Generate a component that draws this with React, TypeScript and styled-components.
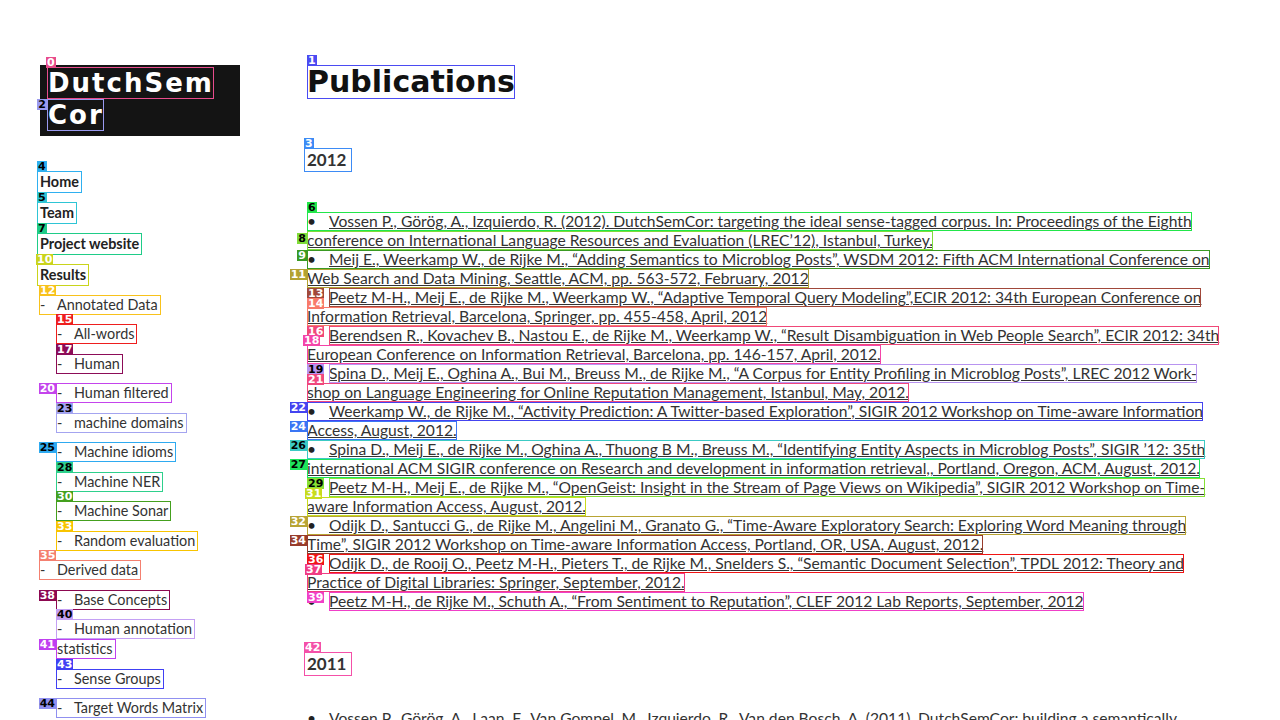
import React from 'react';
import styled, { createGlobalStyle, css } from 'styled-components';

const GlobalStyle = createGlobalStyle`
  html, body { margin: 0; padding: 0; background: #fff; overflow: hidden; }
  body { font-family: Lato, "Open Sans", sans-serif; color: #333; }
`;

const Page = styled.div`
  display: flex;
  align-items: flex-start;
  padding: 65px 0 0 40px;
  height: 720px;
  box-sizing: border-box;
  overflow: hidden;
`;

const Sidebar = styled.aside`
  width: 200px;
  flex-shrink: 0;
  display: flex;
  flex-direction: column;
`;

const Mark = styled.span<{ $c: string }>`
  position: relative;
  display: inline-block;
  outline: 1px solid ${(p) => p.$c};
  outline-offset: -1px;
`;

type At = 'top' | 'left' | 'bullet';

const Badge = styled.span<{ $bg: string; $dark?: boolean; $at: At; $dx?: number; $dy?: number }>`
  position: absolute;
  z-index: 2;
  background: ${(p) => p.$bg};
  color: ${(p) => (p.$dark ? '#000' : '#fff')};
  font-family: "DejaVu Sans", sans-serif;
  font-weight: bold;
  font-size: 11px;
  line-height: 11px;
  letter-spacing: 0;
  padding: 0 1px;
  white-space: nowrap;
  text-decoration: none;
  ${(p) =>
    p.$at === 'top'
      ? css`left: ${p.$dx ?? 0}px; top: ${p.$dy ?? -10}px;`
      : p.$at === 'left'
      ? css`right: 100%; top: ${p.$dy ?? 0}px;`
      : css`left: -22px; top: 0;`}
`;

type TagSpec = { n: number; c: string; dark?: boolean; at: At; dx?: number; dy?: number };

const Tag: React.FC<{ t: TagSpec }> = ({ t }) => (
  <Badge $bg={t.c} $dark={t.dark} $at={t.at} $dx={t.dx} $dy={t.dy}>
    {t.n}
  </Badge>
);

const Logo = styled.div`
  background: #141414;
  color: #fff;
  padding: 2px 0 5px 7px;
  display: flex;
  flex-direction: column;
  align-items: flex-start;
  font-family: "DejaVu Sans", sans-serif;
  font-weight: bold;
  font-size: 26px;
  line-height: 32px;
  letter-spacing: 2px;
`;

const LogoLine = styled(Mark)`
  padding-left: 1px;
`;

const Nav = styled.nav`
  margin-top: 30px;
  display: flex;
  flex-direction: column;
`;

const NavRow = styled.div<{ $h: number; $indent: number }>`
  height: ${(p) => p.$h}px;
  display: flex;
  flex-direction: column;
  justify-content: center;
  align-items: flex-start;
  margin-left: ${(p) => p.$indent}px;
`;

const TopLink = styled(Mark)`
  font-weight: 700;
  font-size: 14.4px;
  line-height: 20px;
  padding: 1px 3px;
  color: #222;
`;

const SubLink = styled(Mark)`
  font-size: 14.4px;
  line-height: 20px;
  padding: 0 3px 0 1px;
  color: #333;
`;

const Dash = styled.span`
  display: inline-block;
  width: 17px;
`;

const Main = styled.main`
  margin-left: 67px;
  flex: 1;
  min-width: 0;
`;

const Title = styled.h1`
  margin: 0;
  font-family: "DejaVu Sans", sans-serif;
  font-weight: bold;
  font-size: 30px;
  line-height: 34px;
  color: #111;
  display: flex;
`;

const YearHeading = styled.h2<{ $mt: number }>`
  margin: ${(p) => p.$mt}px 0 0 -3px;
  display: flex;
  font-family: Lato, sans-serif;
  font-weight: 700;
  font-size: 17px;
  line-height: 20px;
  color: #333;
`;

const YearBox = styled(Mark)`
  padding: 2px 6px 2px 3px;
`;

const PubList = styled.ul<{ $mt: number }>`
  list-style: none;
  margin: ${(p) => p.$mt}px 0 0;
  padding: 0;
  font-size: 15.65px;
  line-height: 19px;
`;

const Pub = styled.li`
  display: flex;
  flex-direction: column;
`;

const PubLine = styled.div`
  height: 19px;
  white-space: nowrap;
  display: flex;
  align-items: flex-start;
`;

const LineBox = styled(Mark)`
  height: 19px;
`;

const Bullet = styled.span`
  display: inline-block;
  width: 22px;
  color: #222;
`;

const PubLink = styled.a`
  color: #333;
  text-decoration: underline;
`;

type NavSpec =
  | { kind: 'top' | 'l1' | 'l2'; text: string; t: TagSpec }
  | { kind: 'wrap'; text: string; rest: string; t: TagSpec; t2: TagSpec };

const nav: NavSpec[] = [
  { kind: 'top', text: 'Home', t: { n: 4, c: '#2fb0f0', dark: true, at: 'top' } },
  { kind: 'top', text: 'Team', t: { n: 5, c: '#2ec5d5', dark: true, at: 'top' } },
  { kind: 'top', text: 'Project website', t: { n: 7, c: '#1fcc88', dark: true, at: 'top' } },
  { kind: 'top', text: 'Results', t: { n: 10, c: '#c9d41c', at: 'top', dx: -1 } },
  { kind: 'l1', text: 'Annotated Data', t: { n: 12, c: '#f8c21c', at: 'top' } },
  { kind: 'l2', text: 'All-words', t: { n: 15, c: '#ee1e1e', at: 'top' } },
  { kind: 'l2', text: 'Human', t: { n: 17, c: '#8c0c58', at: 'top' } },
  { kind: 'l2', text: 'Human filtered', t: { n: 20, c: '#c444ec', at: 'left' } },
  { kind: 'l2', text: 'machine domains', t: { n: 23, c: '#a4a4f0', dark: true, at: 'top' } },
  { kind: 'l2', text: 'Machine idioms', t: { n: 25, c: '#2eaaf0', dark: true, at: 'left' } },
  { kind: 'l2', text: 'Machine NER', t: { n: 28, c: '#2ed08c', dark: true, at: 'top' } },
  { kind: 'l2', text: 'Machine Sonar', t: { n: 30, c: '#44a01e', at: 'top' } },
  { kind: 'l2', text: 'Random evaluation', t: { n: 33, c: '#f8c400', at: 'top' } },
  { kind: 'l1', text: 'Derived data', t: { n: 35, c: '#f48070', at: 'top' } },
  { kind: 'l2', text: 'Base Concepts', t: { n: 38, c: '#8c0850', at: 'left' } },
  {
    kind: 'wrap',
    text: 'Human annotation',
    rest: 'statistics',
    t: { n: 40, c: '#c4a0f4', dark: true, at: 'top' },
    t2: { n: 41, c: '#c040f0', at: 'left' },
  },
  { kind: 'l2', text: 'Sense Groups', t: { n: 43, c: '#4040f4', at: 'top' } },
  { kind: 'l2', text: 'Target Words Matrix', t: { n: 44, c: '#9090f0', dark: true, at: 'left' } },
];

type PubSpec = {
  l1: string;
  l2?: string;
  wrap: boolean;
  t1: TagSpec;
  t2?: TagSpec;
};

const pubs2012: PubSpec[] = [
  {
    l1: 'Vossen P., Görög, A., Izquierdo, R. (2012). DutchSemCor: targeting the ideal sense-tagged corpus. In: Proceedings of the Eighth',
    l2: 'conference on International Language Resources and Evaluation (LREC’12), Istanbul, Turkey.',
    wrap: true,
    t1: { n: 6, c: '#22e64a', dark: true, at: 'top' },
    t2: { n: 8, c: '#7fdc3a', dark: true, at: 'left', dy: 2 },
  },
  {
    l1: 'Meij E., Weerkamp W., de Rijke M., “Adding Semantics to Microblog Posts”, WSDM 2012: Fifth ACM International Conference on',
    l2: 'Web Search and Data Mining, Seattle, ACM, pp. 563-572, February, 2012',
    wrap: true,
    t1: { n: 9, c: '#3a9a22', at: 'left' },
    t2: { n: 11, c: '#b3a232', at: 'left' },
  },
  {
    l1: 'Peetz M-H., Meij E., de Rijke M., Weerkamp W., “Adaptive Temporal Query Modeling”,ECIR 2012: 34th European Conference on',
    l2: 'Information Retrieval, Barcelona, Springer, pp. 455-458, April, 2012',
    wrap: false,
    t1: { n: 13, c: '#a0483a', at: 'bullet' },
    t2: { n: 14, c: '#f87a6a', at: 'top', dy: -9 },
  },
  {
    l1: 'Berendsen R., Kovachev B., Nastou E., de Rijke M., Weerkamp W., “Result Disambiguation in Web People Search”, ECIR 2012: 34th',
    l2: 'European Conference on Information Retrieval, Barcelona, pp. 146-157, April, 2012.',
    wrap: false,
    t1: { n: 16, c: '#f04878', at: 'bullet' },
    t2: { n: 18, c: '#f444a8', at: 'top', dx: -4 },
  },
  {
    l1: 'Spina D., Meij E., Oghina A., Bui M., Breuss M., de Rijke M., “A Corpus for Entity Profiling in Microblog Posts”, LREC 2012 Work-',
    l2: 'shop on Language Engineering for Online Reputation Management, Istanbul, May, 2012.',
    wrap: false,
    t1: { n: 19, c: '#b894f0', dark: true, at: 'bullet' },
    t2: { n: 21, c: '#f0487e', at: 'top', dy: -9 },
  },
  {
    l1: 'Weerkamp W., de Rijke M., “Activity Prediction: A Twitter-based Exploration”, SIGIR 2012 Workshop on Time-aware Information',
    l2: 'Access, August, 2012.',
    wrap: true,
    t1: { n: 22, c: '#4444f0', at: 'left' },
    t2: { n: 24, c: '#3a76f4', at: 'left' },
  },
  {
    l1: 'Spina D., Meij E., de Rijke M., Oghina A., Thuong B M., Breuss M., “Identifying Entity Aspects in Microblog Posts”, SIGIR ’12: 35th',
    l2: 'international ACM SIGIR conference on Research and development in information retrieval,, Portland, Oregon, ACM, August, 2012.',
    wrap: true,
    t1: { n: 26, c: '#3ccac4', dark: true, at: 'left' },
    t2: { n: 27, c: '#1ee45c', dark: true, at: 'left' },
  },
  {
    l1: 'Peetz M-H., Meij E., de Rijke M., “OpenGeist: Insight in the Stream of Page Views on Wikipedia”, SIGIR 2012 Workshop on Time-',
    l2: 'aware Information Access, August, 2012.',
    wrap: false,
    t1: { n: 29, c: '#86e034', dark: true, at: 'bullet' },
    t2: { n: 31, c: '#c8dc1c', at: 'top', dx: -2, dy: -9 },
  },
  {
    l1: 'Odijk D., Santucci G., de Rijke M., Angelini M., Granato G., “Time-Aware Exploratory Search: Exploring Word Meaning through',
    l2: 'Time”, SIGIR 2012 Workshop on Time-aware Information Access, Portland, OR, USA, August, 2012.',
    wrap: true,
    t1: { n: 32, c: '#b8a434', at: 'left' },
    t2: { n: 34, c: '#983c2c', at: 'left' },
  },
  {
    l1: 'Odijk D., de Rooij O., Peetz M-H., Pieters T., de Rijke M., Snelders S., “Semantic Document Selection”, TPDL 2012: Theory and',
    l2: 'Practice of Digital Libraries: Springer, September, 2012.',
    wrap: false,
    t1: { n: 36, c: '#f01414', at: 'bullet' },
    t2: { n: 37, c: '#f03c84', at: 'top', dx: -2, dy: -9 },
  },
  {
    l1: 'Peetz M-H., de Rijke M., Schuth A., “From Sentiment to Reputation”, CLEF 2012 Lab Reports, September, 2012',
    wrap: false,
    t1: { n: 39, c: '#f040c8', at: 'bullet' },
  },
];

const NavEntry: React.FC<{ item: NavSpec; h: number }> = ({ item, h }) => {
  if (item.kind === 'top') {
    return (
      <NavRow $h={h} $indent={-3}>
        <TopLink $c={item.t.c}>
          <Tag t={item.t} />
          {item.text}
        </TopLink>
      </NavRow>
    );
  }
  if (item.kind === 'wrap') {
    return (
      <NavRow $h={h} $indent={16}>
        <SubLink $c={item.t.c}>
          <Tag t={item.t} />
          <Dash>-</Dash>
          {item.text}
        </SubLink>
        <SubLink $c={item.t2.c}>
          <Tag t={item.t2} />
          {item.rest}
        </SubLink>
      </NavRow>
    );
  }
  return (
    <NavRow $h={h} $indent={item.kind === 'l1' ? -1 : 16}>
      <SubLink $c={item.t.c}>
        <Tag t={item.t} />
        <Dash>-</Dash>
        {item.text}
      </SubLink>
    </NavRow>
  );
};

const PubEntry: React.FC<{ p: PubSpec }> = ({ p }) => (
  <Pub>
    <PubLine>
      {p.wrap ? (
        <LineBox $c={p.t1.c}>
          <Tag t={p.t1} />
          <Bullet>•</Bullet>
          <PubLink href="#">{p.l1}</PubLink>
        </LineBox>
      ) : (
        <>
          <Bullet>•</Bullet>
          <LineBox $c={p.t1.c}>
            <Tag t={p.t1} />
            <PubLink href="#">{p.l1}</PubLink>
          </LineBox>
        </>
      )}
    </PubLine>
    {p.l2 && p.t2 && (
      <PubLine>
        <LineBox $c={p.t2.c}>
          <Tag t={p.t2} />
          <PubLink href="#">{p.l2}</PubLink>
        </LineBox>
      </PubLine>
    )}
  </Pub>
);

export default function App() {
  return (
    <>
      <GlobalStyle />
      <Page>
        <Sidebar>
          <Logo>
            <LogoLine $c="#e84c8c">
              <Tag t={{ n: 0, c: '#e84c8c', at: 'top', dx: -1 }} />
              DutchSem
            </LogoLine>
            <LogoLine $c="#9a9af0">
              <Tag t={{ n: 2, c: '#9a9af0', dark: true, at: 'left' }} />
              Cor
            </LogoLine>
          </Logo>
          <Nav>
            {nav.map((item, i) => (
              <NavEntry
                key={i}
                item={item}
                h={item.kind === 'top' ? 31 : item.kind === 'wrap' ? 49.5 : 29.5}
              />
            ))}
          </Nav>
        </Sidebar>
        <Main>
          <Title>
            <Mark $c="#4b4bf2">
              <Tag t={{ n: 1, c: '#4b4bf2', at: 'top' }} />
              Publications
            </Mark>
          </Title>
          <YearHeading $mt={49}>
            <YearBox $c="#3d8bf5">
              <Tag t={{ n: 3, c: '#3d8bf5', at: 'top' }} />
              2012
            </YearBox>
          </YearHeading>
          <PubList $mt={40}>
            {pubs2012.map((p, i) => (
              <PubEntry key={i} p={p} />
            ))}
          </PubList>
          <YearHeading $mt={41}>
            <YearBox $c="#f450a8">
              <Tag t={{ n: 42, c: '#f450a8', at: 'top' }} />
              2011
            </YearBox>
          </YearHeading>
          <PubList $mt={33}>
            <Pub>
              <PubLine>
                <Bullet>•</Bullet>
                <PubLink href="#">
                  Vossen P., Görög, A., Laan, F., Van Gompel, M., Izquierdo, R., Van den Bosch, A. (2011). DutchSemCor: building a semantically
                </PubLink>
              </PubLine>
            </Pub>
          </PubList>
        </Main>
      </Page>
    </>
  );
}
